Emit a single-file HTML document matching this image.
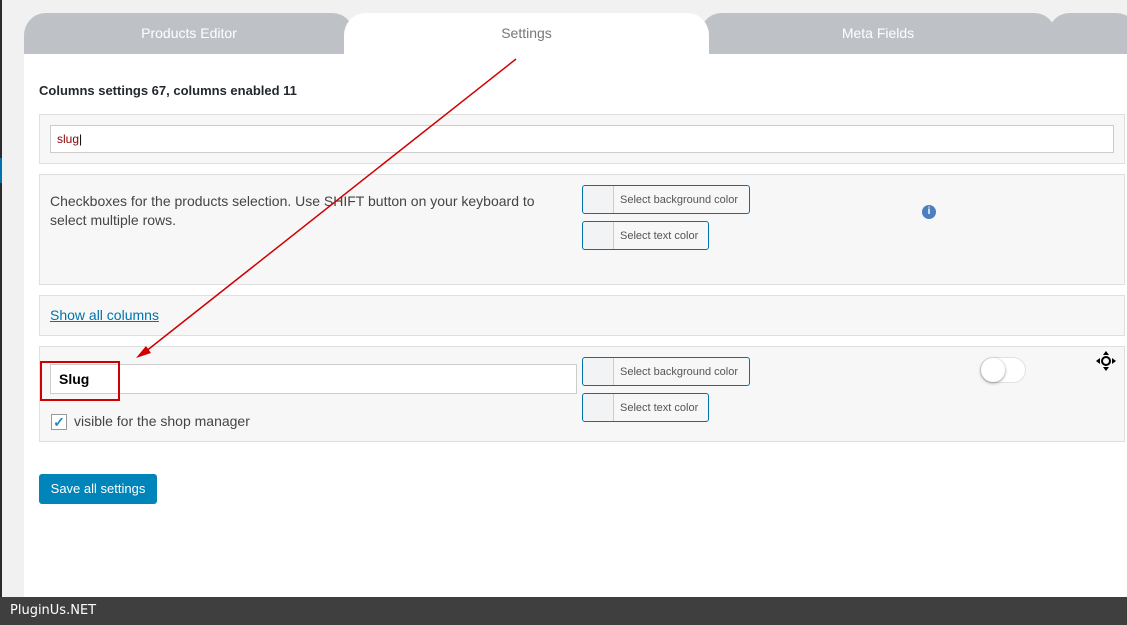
<!DOCTYPE html>
<html><head><style>
*{box-sizing:border-box;margin:0;padding:0}
body{width:1127px;height:625px;position:relative;background:#f1f1f1;font-family:"Liberation Sans",sans-serif;overflow:hidden;color:#333}
.abs{position:absolute}
.box{position:absolute;left:39px;width:1086px;background:#f7f7f7;border:1px solid #dfdfdf}
.tab{position:absolute;top:13px;height:41px;background:#bec2c7;color:#fff;font-size:14px;text-align:center;line-height:40px;border-radius:22px 22px 0 0}
.cbtn{position:absolute;height:29px;border:1px solid #0073aa;border-radius:3px;background:#f7f7f7;font-size:11px;color:#555;line-height:29px}
.cbtn span{display:inline-block;width:31px;height:27px;border-right:1px solid #ccc;background:#f1f3f5;vertical-align:top;margin-right:6px;border-radius:3px 0 0 3px}
</style></head><body>
<div class="abs" style="left:0;top:0;width:2px;height:597px;background:#2b2b2b"></div>
<div class="abs" style="left:0;top:158px;width:2px;height:25px;background:#0073aa"></div>
<div class="abs" style="left:24px;top:54px;width:1103px;height:543px;background:#fff"></div>
<div class="tab" style="left:24px;width:330px;">Products Editor</div>
<div class="tab" style="left:700px;width:356px;">Meta Fields</div>
<div class="tab" style="left:1048px;width:90px;"></div>
<div class="tab" style="left:344px;width:365px;background:#fff;color:#777;top:13px">Settings</div>
<div class="abs" style="left:39px;top:83px;font-size:13px;font-weight:bold;color:#23282d">Columns settings 67, columns enabled 11</div>
<div class="box" style="top:114px;height:50px"><div class="abs" style="left:10px;top:10px;width:1064px;height:28px;background:#fff;border:1px solid #ccc;font-size:12px;color:#8b0000;line-height:26px;padding-left:6px">slug<span style="color:#000">|</span></div></div>
<div class="box" style="top:174px;height:111px">
<div class="abs" style="left:10px;top:17px;width:520px;font-size:14px;line-height:19px;color:#444">Checkboxes for the products selection. Use SHIFT button on your keyboard to select multiple rows.</div>
<div class="cbtn" style="left:542px;top:10px;width:168px"><span></span>Select background color</div>
<div class="cbtn" style="left:542px;top:46px;width:127px"><span></span>Select text color</div>
<div class="abs" style="left:882px;top:30px;width:14px;height:14px;border-radius:50%;background:#4a7fc0;color:#fff;font-size:10px;text-align:center;line-height:14px;font-weight:bold">i</div>
</div>
<div class="box" style="top:295px;height:41px"><div class="abs" style="left:10px;top:11px;font-size:14px;color:#0073aa;text-decoration:underline">Show all columns</div></div>
<div class="box" style="top:346px;height:96px">
<div class="abs" style="left:10px;top:17px;width:527px;height:30px;background:#fff;border:1px solid #ccc;font-size:14px;font-weight:bold;color:#000;line-height:28px;padding-left:8px">Slug</div>
<div class="abs" style="left:11px;top:67px;width:16px;height:16px;border:1px solid #999;background:#fff;color:#1e8cbe;font-size:14px;line-height:14px;text-align:center;font-weight:bold">✓</div>
<div class="abs" style="left:34px;top:66px;font-size:14px;color:#444">visible for the shop manager</div>
<div class="cbtn" style="left:542px;top:10px;width:168px"><span></span>Select background color</div>
<div class="cbtn" style="left:542px;top:46px;width:127px"><span></span>Select text color</div>
<div class="abs" style="left:940px;top:10px;width:46px;height:26px;border-radius:13px;background:#fff;border:1px solid #e2e2e2"></div>
<div class="abs" style="left:941px;top:11px;width:24px;height:24px;border-radius:50%;background:#fff;box-shadow:0 1px 3px rgba(0,0,0,.4)"></div>
<svg class="abs" style="left:1056px;top:4px" width="20" height="20" viewBox="0 0 20 20"><circle cx="10" cy="10" r="4" fill="none" stroke="#000" stroke-width="2"/><polygon points="10,0 7,4 13,4" fill="#000"/><polygon points="10,20 7,16 13,16" fill="#000"/><polygon points="0,10 4,7 4,13" fill="#000"/><polygon points="20,10 16,7 16,13" fill="#000"/></svg>
</div>
<div class="abs" style="left:40px;top:361px;width:80px;height:40px;border:2px solid #d00000"></div>
<div class="abs" style="left:39px;top:474px;width:118px;height:30px;background:#0085ba;border-radius:3px;color:#fff;font-size:13px;line-height:30px;text-align:center">Save all settings</div>
<svg class="abs" style="left:0;top:0" width="1127" height="625"><line x1="516" y1="59" x2="145" y2="352" stroke="#d00000" stroke-width="1.5"/><polygon points="136,358 146,346 151,353" fill="#d00000"/></svg>
<div class="abs" style="left:0;top:597px;width:1127px;height:28px;background:#3f3f3f;color:#fff;font-family:'DejaVu Sans',sans-serif;font-size:13px;line-height:28px;padding-left:10px">PluginUs.NET</div>
</body></html>
